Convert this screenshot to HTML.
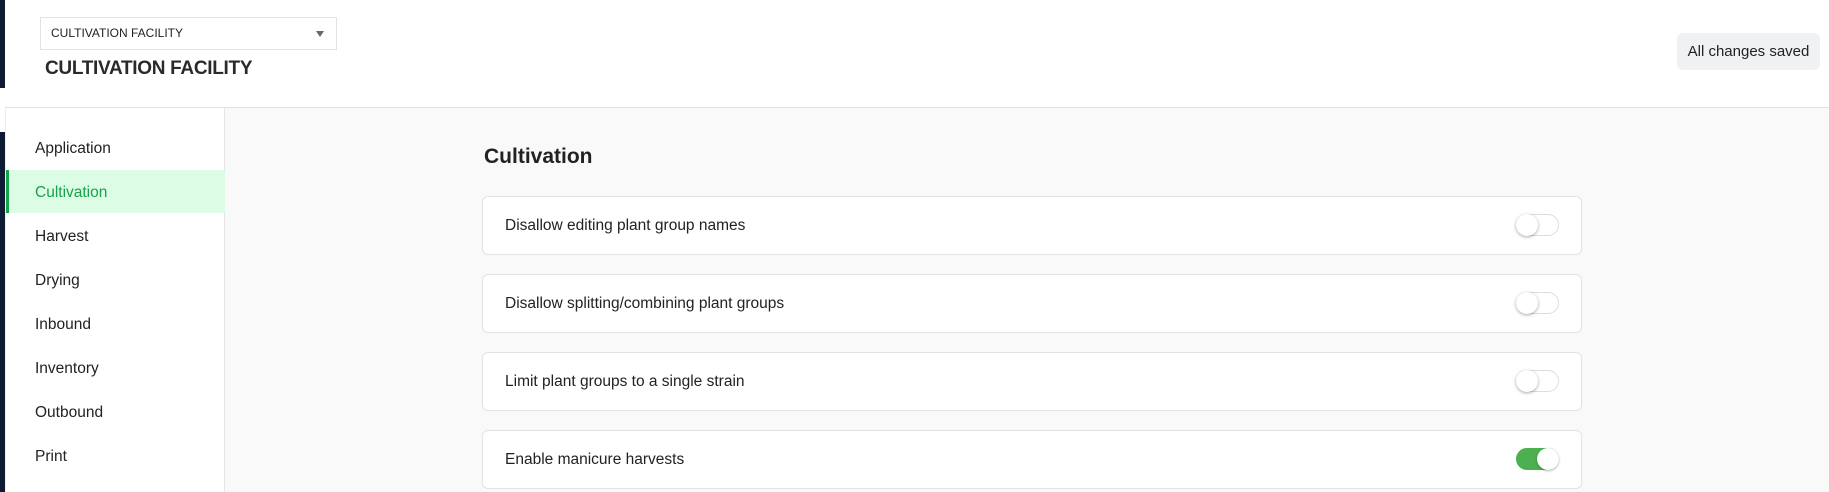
<!DOCTYPE html>
<html><head><meta charset="utf-8"><style>
*{box-sizing:border-box;margin:0;padding:0}
body{width:1829px;height:492px;overflow:hidden;background:#fff;font-family:"Liberation Sans",Arial,sans-serif;color:#222;position:relative}
.bar1{position:absolute;left:0;top:0;width:5px;height:88px;background:#0f1b33}
.bar2{position:absolute;left:0;top:132px;width:5px;height:360px;background:#0f1b33}
.header{position:absolute;left:5px;top:0;right:0;height:108px;border-bottom:1px solid #e3e3e3;background:#fff}
.dd{position:absolute;left:40px;top:17px;width:297px;height:33px;border:1px solid #e3e3e3;font-size:12px;line-height:31px;padding-left:10px;color:#222}
.dd .arr{position:absolute;right:12px;top:13px;width:0;height:0;border-left:4px solid transparent;border-right:4px solid transparent;border-top:6px solid #666}
.title{position:absolute;left:45px;top:58px;font-size:19px;font-weight:bold;color:#2a2a2a;letter-spacing:-0.3px}
.save{position:absolute;left:1677px;top:33px;width:143px;height:37px;background:#f0f1f3;border-radius:6px;font-size:15px;line-height:37px;text-align:center;color:#222}
.side{position:absolute;left:5px;top:108px;width:220px;height:384px;border-right:1px solid #e5e5e5;border-left:1px solid #eee;background:#fff}
.item{position:absolute;left:0;width:219px;height:43px;line-height:45px;padding-left:29px;font-size:15.5px;color:#222}
.item.act{background:#ddfce6;color:#16a34a;border-left:3px solid #16a34a;padding-left:26px}
.main{position:absolute;left:225px;top:108px;right:0;bottom:0;background:#f9f9f9}
h2{position:absolute;left:484px;top:145px;font-size:21px;font-weight:bold;color:#222}
.card{position:absolute;left:482px;width:1100px;height:59px;background:#fff;border:1px solid #e3e3e3;border-radius:6px}
.card span{position:absolute;left:22px;top:0;line-height:57px;font-size:15.5px;color:#222}
.tg{position:absolute;left:1033px;top:17px;width:43px;height:22px;border-radius:11px;border:1px solid #ddd;background:#fff}
.tg::after{content:"";position:absolute;left:-1px;top:-1px;width:22px;height:22px;border-radius:50%;background:#fff;box-shadow:0 1px 3px rgba(0,0,0,.35)}
.tg.on{background:#4caf50;border-color:#4caf50}
.tg.on::after{left:20px;box-shadow:0 1px 2px rgba(0,0,0,.3)}
</style></head><body>
<div class="header">
</div>
<div class="bar1"></div><div class="bar2"></div>
<div class="dd">CULTIVATION FACILITY<div class="arr"></div></div>
<div class="title">CULTIVATION FACILITY</div>
<div class="save">All changes saved</div>
<div class="side">
<div class="item" style="top:18px">Application</div>
<div class="item act" style="top:62px">Cultivation</div>
<div class="item" style="top:106px">Harvest</div>
<div class="item" style="top:150px">Drying</div>
<div class="item" style="top:194px">Inbound</div>
<div class="item" style="top:238px">Inventory</div>
<div class="item" style="top:282px">Outbound</div>
<div class="item" style="top:326px">Print</div>
</div>
<div class="main"></div>
<h2>Cultivation</h2>
<div class="card" style="top:196px"><span>Disallow editing plant group names</span><div class="tg"></div></div>
<div class="card" style="top:274px"><span>Disallow splitting/combining plant groups</span><div class="tg"></div></div>
<div class="card" style="top:352px"><span>Limit plant groups to a single strain</span><div class="tg"></div></div>
<div class="card" style="top:430px"><span>Enable manicure harvests</span><div class="tg on"></div></div>
</body></html>
